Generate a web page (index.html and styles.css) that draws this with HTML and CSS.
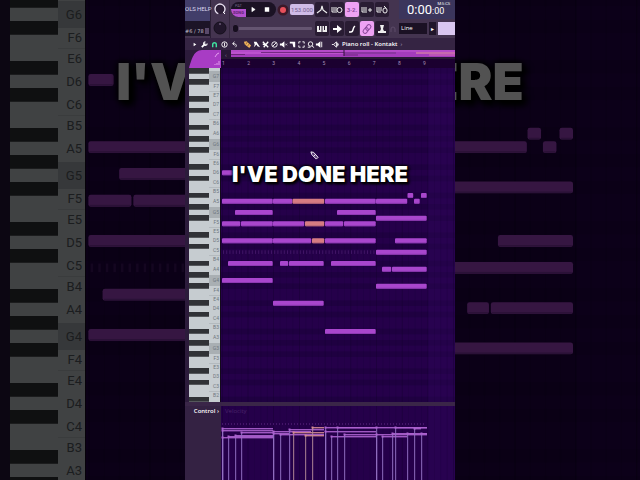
FILE: index.html
```
<!DOCTYPE html>
<html lang="en">
<head>
    <meta charset="UTF-8">
    <meta name="viewport" content="width=device-width, initial-scale=1.0">
    <title>Piano roll</title>
    <link rel="stylesheet" href="styles.css">
</head>
<body>
    <div class="stage">
        <!-- Enlarged, darkened roll behind the panel -->
        <div class="backdrop" aria-hidden="true">
            <div class="keyboard large" data-first="6" data-last="3"></div>
            <svg class="roll-canvas" viewBox="-1 71 234 203" preserveAspectRatio="xMinYMin slice"></svg>
            <p class="caption large">I'VE DONE HERE</p>
            <div class="shade"></div>
        </div>

        <main class="panel">
            <header class="toolbar">
                <div class="hints">
                    <div class="menu"><a href="#tools">OLS</a><a href="#help">HELP</a></div>
                    <div class="counter"><span>#6 / 78</span><i></i></div>
                </div>
                <div class="knobs">
                    <svg viewBox="0 0 16 19"><circle cx="8" cy="9" r="5" fill="#2b1d35" stroke="#e8e0f0" stroke-width="1.3" stroke-dasharray="25 7" transform="rotate(110 8 9)"/><path d="M11 12l2 2" stroke="#fff"/></svg>
                    <svg viewBox="0 0 16 19"><circle cx="8" cy="9" r="6" fill="#21162b" stroke="#15101c"/><path d="M8 4v2" stroke="#8d7a9c"/></svg>
                </div>
                <div class="transport">
                    <div class="line">
                        <div class="pill">
                            <button class="mode" aria-label="Pattern or song"><span>PAT</span><b>SONG</b></button>
                            <button aria-label="Play"><svg viewBox="0 0 10 10"><path d="M4 3l3 2-3 2z" fill="#fff" stroke="#fff" stroke-width=".5"/></svg></button>
                            <button aria-label="Stop"><svg viewBox="0 0 10 10"><path d="M3 3h4v4H3z" fill="#fff"/></svg></button>
                        </div>
                        <button class="record" aria-label="Record"><svg viewBox="0 0 12 12"><circle cx="6" cy="6" r="5.5" fill="#3c1828"/><circle cx="6" cy="6" r="3" fill="#e8505c"/></svg></button>
                        <input class="tempo" type="text" value="153.000" aria-label="Tempo">
                    </div>
                    <div class="line">
                        <input class="pitch" type="range" value="0" aria-label="Pitch">
                    </div>
                </div>
                <div class="switches">
                    <button aria-label="Metronome"><svg viewBox="0 0 14 14"><path d="M2 10l4-3 1-4 1 4 4 3" fill="none" stroke="#eee" stroke-width="1.2"/></svg></button>
                    <button aria-label="Wait for input"><svg viewBox="0 0 14 14"><path d="M2 4v5h5M4 4v4M6 4v4" fill="none" stroke="#eee"/><circle cx="9.500" cy="7" r="2.500" fill="none" stroke="#eee"/></svg></button>
                    <button class="on" aria-label="Countdown">3·2.</button>
                    <button aria-label="Overdub"><svg viewBox="0 0 14 14"><path d="M2 4v5h5M4 4v4M6 4v4M8 7h4M10 5v4" fill="none" stroke="#eee"/></svg></button>
                    <button aria-label="Loop record"><svg viewBox="0 0 14 14"><path d="M2 4v5h4M4 4v4M6 4v4" fill="none" stroke="#eee"/><rect x="8" y="5" width="4" height="5" rx="2" fill="none" stroke="#eee"/><path d="M9 3l2 2" stroke="#eee"/></svg></button>
                    <button aria-label="Typing keyboard"><svg viewBox="0 0 14 14"><path d="M2 4h10v6H2z" fill="#eee"/><path d="M4.500 4v4M7 4v6M9.500 4v4" stroke="#2a1c34"/></svg></button>
                    <button aria-label="Step edit"><svg viewBox="0 0 14 14"><path d="M3 6h4V3l5 4-5 4V8H3z" fill="#fff"/></svg></button>
                    <button aria-label="Glide"><svg viewBox="0 0 14 14"><path d="M4 10h2c3 0 1-4 4-6" fill="none" stroke="#fff" stroke-width="1.500"/></svg></button>
                    <button class="on" aria-label="Link"><svg viewBox="0 0 14 14"><g transform="rotate(-50 7 7)" fill="none" stroke="#8b4a9c"><rect x="2" y="5" width="6" height="4" rx="2"/><rect x="6" y="5" width="6" height="4" rx="2"/></g></svg></button>
                    <button aria-label="Metronome stamp"><svg viewBox="0 0 14 14"><path d="M3 11V9h2l1-2-1-4h4L8 7l1 2h2v2z" fill="#eee"/></svg></button>
                </div>
                <div class="status">
                    <div class="clock"><span>0:00<small>:00</small></span><sup>M:S:CS</sup></div>
                    <div class="snap">
                        <svg viewBox="0 0 8 10"><path d="M2 8V5a2 2 0 0 1 4 0v3" fill="none" stroke="#5c4b68"/></svg>
                        <select aria-label="Snap"><option>Line</option></select>
                        <button aria-label="Next">▸</button>
                        <span class="field"></span>
                    </div>
                </div>
            </header>

            <nav class="titlebar">
                <div class="tools main-tools">
                    <button aria-label="Menu"><svg viewBox="0 0 10 10"><path d="M4 3l3 2-3 2z" fill="#fff"/></svg></button>
                    <button aria-label="Options"><svg viewBox="0 0 10 10"><path d="M2 8l4-4" stroke="#fff" stroke-width="2"/><path d="M8 4a2 2 0 1 1-2-2" fill="none" stroke="#fff" stroke-width="1.300"/></svg></button>
                    <button aria-label="Magnet"><svg viewBox="0 0 10 10"><path d="M3 8V5a2 2 0 0 1 4 0v3" fill="none" stroke="#3fe0a0" stroke-width="1.600"/></svg></button>
                    <button aria-label="Stamp"><svg viewBox="0 0 10 10"><circle cx="5" cy="5" r="3" fill="none" stroke="#fff"/><path d="M5 3v4" stroke="#fff"/></svg></button>
                    <button aria-label="Undo"><svg viewBox="0 0 10 10"><path d="M6 8c2-2 1-4-3-4M5 2L3 4l2 2" fill="none" stroke="#fff"/></svg></button>
                </div>
                <div class="tools">
                    <button aria-label="Draw"><svg viewBox="0 0 10 10"><path d="M1 2l3-.5L9 6 7 9 2 5z" fill="#f0b45c"/><path d="M3 5l2-3M5 7l2-3" stroke="#5a3a20" stroke-width=".6"/></svg></button>
                    <button aria-label="Paint"><svg viewBox="0 0 10 10"><path d="M2 2h3l2 3 2 3-3-1-1-2-3 3 1-3z" fill="#fff"/></svg></button>
                    <button aria-label="Paint drums"><svg viewBox="0 0 10 10"><path d="M2 2l6 6M8 2L3 8M2 5l3-1" stroke="#fff" stroke-width="1.500"/></svg></button>
                    <button aria-label="Delete"><svg viewBox="0 0 10 10"><circle cx="5" cy="5" r="3" fill="none" stroke="#fff"/><path d="M3 7l4-4" stroke="#fff"/></svg></button>
                    <button aria-label="Mute"><svg viewBox="0 0 10 10"><path d="M1 4h2l3-2.500v7L3 6H1z" fill="#fff"/><path d="M7 4l2 2M9 4L7 6" stroke="#fff" stroke-width=".7"/></svg></button>
                    <button aria-label="Slice"><svg viewBox="0 0 10 10"><path d="M2 2h6v6H6L5 4H2z" fill="#fff"/></svg></button>
                    <button aria-label="Select"><svg viewBox="0 0 10 10"><path d="M2 4V2h2M6 2h2v2M8 6v2H6M4 8H2V6" fill="none" stroke="#fff"/></svg></button>
                    <button aria-label="Zoom"><svg viewBox="0 0 10 10"><circle cx="5" cy="4.500" r="2.500" fill="none" stroke="#fff"/><path d="M6.500 6.500L9 8.500M2 8h3" stroke="#fff"/></svg></button>
                    <button aria-label="Playback"><svg viewBox="0 0 10 10"><path d="M1 4h2l3-2.500v7L3 6H1zM7 2h1v6H7z" fill="#fff"/></svg></button>
                </div>
                <button class="target" aria-label="Target"><svg viewBox="0 0 10 10"><path d="M1 5h2l3-3v6L3 5M7 3v4M8 4v2" fill="none" stroke="#fff"/></svg></button>
                <h1>Piano roll - Kontakt</h1><span class="more">›</span>
            </nav>

            <section class="editor">
                <div class="corner"><svg viewBox="0 0 32 18"><path d="M0 18C2 12 4 0 13 0h19v18z" fill="#a83cc4"/><path d="M26 7l2-3 2-1" stroke="#e49cf0" fill="none"/><path d="M26 15v-1M28 15v-2M30 15v-4" stroke="#e49cf0"/></svg></div>
                <div class="timeline">
                    <div class="minimap">
                        <button aria-label="Scroll left">‹</button>
                        <svg viewBox="0 0 224 9" preserveAspectRatio="none">
                            <path d="M0 0h224v7H0z" fill="#a43cbc"/>
                            <path d="M0 1h224" stroke="#c458d4"/>
                            <path d="M0 3h113" stroke="#d468e0"/>
                            <path d="M113 3h52" stroke="#713085"/>
                            <path d="M0 4.500h14M30 2.500h83M113 5h14" stroke="#61206f" stroke-width=".8"/>
                            <path d="M185 3h39" stroke="#e698a0"/>
                            <path d="M198 5h26" stroke="#d46cb4"/>
                            <path d="M113 0v6" stroke="#30103c"/>
                        </svg>
                    </div>
                    <ol class="ruler"><li>1</li><li>2</li><li>3</li><li>4</li><li>5</li><li>6</li><li>7</li><li>8</li><li>9</li><li></li></ol>
                </div>
                <div class="keyboard" data-first="7" data-last="2"></div>
                <svg class="roll-canvas" viewBox="-1 0 234 334" preserveAspectRatio="xMinYMin slice"></svg>
            </section>

            <section class="control">
                <div class="control-name">Control <span>›</span></div>
                <div class="velocity">
                    <span class="velocity-name">Velocity</span>
                    <svg id="velocity" viewBox="-1 0 234 75" preserveAspectRatio="xMinYMin slice"></svg>
                </div>
            </section>

            <p class="caption">I'VE DONE HERE</p>
            <svg class="pencil" viewBox="0 0 10 10"><path d="M1 1l3 .5L9 7 7 9 2 4z" fill="#5c3c78" stroke="#fff"/><path d="M4 6l2-2" stroke="#fff"/></svg>
        </main>
    </div>
    <script src="script.js"></script>
</body>
</html>
```
FILE: styles.css
```
* {
    box-sizing: border-box;
    margin: 0;
    padding: 0;
}

body {
    background: #000;
    color: #fff;
    font-family: "Open Sans", "Noto Sans", sans-serif;
    overflow: hidden;
}

svg {
    display: block;
}

button {
    border: none;
    background: none;
    color: inherit;
    font: inherit;
    cursor: pointer;
}

.stage {
    position: relative;
    display: flex;
    justify-content: center;
    height: 100vh;
}

/* backdrop */
.backdrop {
    position: absolute;
    inset: 0;
    display: flex;
    padding-left: 10px;
    background: #26143a;
    overflow: hidden;
}

.shade {
    position: absolute;
    inset: 0;
    background: rgba(0, 0, 0, 0.68);
}

.caption {
    position: absolute;
    top: 161px;
    left: 0;
    right: 0;
    text-align: center;
    white-space: nowrap;
    font: 900 22px/26px Inter, sans-serif;
    text-shadow: 0 0 3px #000, 0 0 3px #000, 1px 1px 3px #000, 2px 2px 3px #000;
}

.caption.large {
    top: 52px;
    font-size: 51px;
    line-height: 60px;
    text-shadow: 0 0 7px #000, 0 0 7px #000, 3px 3px 7px #000, 5px 5px 7px #000;
}

/* panel */
.panel {
    position: relative;
    display: flex;
    flex-direction: column;
    height: 100%;
    aspect-ratio: 9 / 16;
    background: #2c1b3b;
    overflow: hidden;
}

.toolbar {
    display: flex;
    height: 38px;
    background: #443450;
}

.hints {
    width: 26px;
    border-right: 1px solid #2b1f36;
}

.menu {
    display: flex;
    gap: 1px;
    height: 21px;
    padding-top: 4px;
    background: #423e6a;
    font: 6px/10px Roboto, sans-serif;
}

.menu a {
    color: #d8d4ec;
    text-decoration: none;
}

.counter {
    display: flex;
    align-items: center;
    justify-content: space-between;
    height: 15px;
    padding: 5px 1px 0 0;
    background: #1c1427;
    color: #c8c0d0;
    font: 5px/8px "DejaVu Sans", sans-serif;
    white-space: nowrap;
}

.counter i {
    width: 4px;
    height: 6px;
    background: #59496a;
}

.knobs {
    width: 19px;
    padding-left: 1px;
    border-right: 1px solid #35273f;
}

.knobs svg {
    width: 16px;
    height: 19px;
}

.transport {
    width: 85px;
}

.line {
    display: flex;
    align-items: center;
    height: 19px;
    padding: 0 1px;
}

.pill {
    display: flex;
    align-items: center;
    width: 45px;
    height: 15px;
    border-radius: 8px;
    background: #1b1224;
    overflow: hidden;
}

.pill button {
    width: 14px;
}

.pill svg {
    width: 14px;
    height: 11px;
}

.pill .mode {
    display: flex;
    flex-direction: column;
    width: 15px;
    height: 15px;
    font: 4px/7px Roboto, sans-serif;
    color: #756482;
}

.mode b {
    background: #b552d0;
    color: #5d2272;
    line-height: 8px;
}

.record svg {
    width: 12px;
    height: 12px;
}

.record {
    margin: 0 1px;
}

.tempo {
    width: 24px;
    height: 11px;
    border: none;
    border-radius: 2px;
    background: #d0bce8;
    color: #766091;
    font: 6px/11px Roboto, sans-serif;
    text-align: center;
}

.pitch {
    appearance: none;
    width: 80px;
    height: 3px;
    margin-left: 1px;
    border-radius: 1px;
    background: #655571;
}

.pitch::-webkit-slider-thumb {
    appearance: none;
    width: 7px;
    height: 9px;
    border-radius: 3px;
    border: 1px solid #483755;
    background: #160e1e;
}

.switches {
    display: grid;
    grid-template-columns: repeat(5, 14px);
    grid-auto-rows: 15px;
    gap: 4px 1px;
    padding-top: 2px;
}

.switches button {
    border-radius: 2px;
    background: #291c33;
    font: bold 6px/15px Roboto, sans-serif;
}

.switches .on {
    background: #eea2f4;
    color: #8b4a9c;
}

.switches svg {
    width: 14px;
    height: 14px;
}

.status {
    flex: 1;
    min-width: 0;
}

.clock {
    display: flex;
    height: 19px;
    margin-left: 10px;
    padding-left: 8px;
    background: #3b355c;
    font: 13px/19px Roboto, sans-serif;
    overflow: hidden;
}

.clock small {
    font-size: 9px;
}

.clock sup {
    margin-left: -7px;
    font-size: 4px;
    line-height: 8px;
}

.snap {
    display: flex;
    align-items: center;
    gap: 2px;
    height: 19px;
}

.snap svg {
    width: 8px;
    height: 10px;
}

.snap select {
    appearance: none;
    width: 28px;
    height: 11px;
    padding-left: 2px;
    border: none;
    background: #1b1124;
    color: #fff;
    font: 6px/11px "Open Sans", sans-serif;
}

.snap button {
    width: 7px;
    height: 13px;
    background: #20152a;
    font-size: 6px;
}

.field {
    flex: 1;
    height: 13px;
    background: #d9c6f0;
}

.titlebar {
    display: flex;
    align-items: center;
    height: 12px;
    padding-left: 5px;
    background: #352443;
}

.tools {
    display: flex;
    margin-right: 7px;
}

.titlebar svg {
    width: 9px;
    height: 9px;
}

.tools button {
    width: 9px;
}

.main-tools {
    margin-right: 3px;
}

.main-tools button {
    width: 10px;
}

.titlebar h1 {
    margin-left: 2px;
    font: 600 6px/11px "Open Sans", sans-serif;
    white-space: nowrap;
}

.more {
    margin-left: 3px;
    font-size: 6px;
    color: #b4a4c0;
}

.editor {
    flex: 1;
    min-height: 0;
    display: grid;
    grid-template-columns: 32px 1fr;
    grid-template-rows: 18px 1fr;
    padding-left: 4px;
}

.corner svg {
    width: 100%;
    height: 18px;
}

.timeline {
    background: #1b0030;
    min-width: 0;
}

.minimap {
    display: flex;
    height: 9px;
    background: #281735;
}

.minimap button {
    width: 10px;
    font-size: 6px;
    line-height: 8px;
    color: #8a7698;
}

.minimap svg {
    flex: 1;
    min-width: 0;
    height: 9px;
}

.ruler {
    display: grid;
    grid-template-columns: repeat(9, 11fr) 3fr;
    list-style: none;
    height: 9px;
    padding-left: 1px;
    color: #a592b8;
    font: 5px/9px Roboto, sans-serif;
}

/* keyboard: an octave is 24 half steps high, key faces span 3 or 4 of them */
.keyboard {
    margin-top: -17px;
    overflow: hidden;
    clip-path: inset(17px 0 0 0);
    border-right: 1px solid #14091c;
    background: #c6ccd0;
}

.octave {
    display: grid;
    grid-template-columns: 20fr 11fr;
    grid-template-rows: repeat(24, minmax(0, 1fr));
    height: 68px;
}

.key {
    grid-column: 2;
    display: flex;
    align-items: center;
    justify-content: flex-end;
    padding-right: 1px;
    min-height: 0;
    color: #6f777f;
    font: 5px/5px Roboto, sans-serif;
}

.key.root {
    background: #a9afb3;
}

.key.edge {
    border-top: 1px solid #b4babe;
}

.black {
    grid-column: 1;
    background: #303236;
    border-bottom: 1px solid #55585c;
}

.keyboard.large {
    flex: none;
    width: 76px;
    margin-top: -46px;
    clip-path: none;
}

.large .octave {
    height: 161px;
}

.large .key {
    padding-right: 3px;
    color: #555a60;
    font-size: 13px;
    line-height: 13px;
}

.roll-canvas {
    width: 100%;
    height: 100%;
    min-width: 0;
    min-height: 0;
    background: #25004a;
}

.control {
    display: flex;
    height: 78px;
    border-top: 4px solid #3a2648;
}

.control-name {
    width: 36px;
    padding: 1px 2px 0 0;
    background: #342243;
    font-size: 6px;
    font-weight: 600;
    line-height: 8px;
    text-align: right;
    white-space: nowrap;
}

.velocity {
    position: relative;
    flex: 1;
    min-width: 0;
    background: #25004a;
}

.velocity-name {
    position: absolute;
    top: 1px;
    left: 4px;
    color: #4b246a;
    font-size: 6px;
    line-height: 8px;
}

.velocity svg {
    width: 100%;
    height: 100%;
}

.pencil {
    position: absolute;
    top: 151px;
    left: 125px;
    width: 9px;
    height: 9px;
}
```
FILE: script.js
```
var STEP = 68 / 12;   // height of one semitone
var BAR = 25.7;       // width of one bar

// white keys from the top of an octave: name, rows spanned
var whites = [["B", 3], ["A", 4], ["G", 4], ["F", 3], ["E", 3], ["D", 4], ["C", 3]];
var blacks = [3, 7, 11, 17, 21];

// [row below B7, start, end, selected]
var notes = [
    [21, 0, 11],
    [25, 185.5, 191.5], [25, 199, 205],
    [26, 0, 51], [26, 51, 70.5], [26, 70.5, 102.5, 1], [26, 103, 154], [26, 154, 185.5], [26, 192, 198],
    [28, 13, 51], [28, 115, 154],
    [29, 154, 205],
    [30, 0, 18.5], [30, 19, 51], [30, 51, 82.5], [30, 83, 102.5, 1], [30, 103, 121.5], [30, 122, 154],
    [33, 0, 51], [33, 51, 89.5], [33, 90, 102.5, 1], [33, 103, 154], [33, 173, 205],
    [35, 154, 205],
    [37, 6, 51], [37, 58, 66.5], [37, 67, 102], [37, 109, 154],
    [38, 160, 169.5], [38, 170, 205],
    [40, 0, 51],
    [41, 154, 205],
    [44, 51, 102],
    [49, 103, 154]
];

// velocity handles: [start, end, y, selected]
var levels = [
    [0, 51, 22], [0, 51, 24], [6, 51, 30], [13, 51, 29], [19, 51, 26], [0, 51, 31],
    [51, 89, 25], [51, 67, 27], [58, 102, 28], [67, 102, 23], [71, 102, 26, 1],
    [83, 102, 29, 1], [90, 102, 21, 1],
    [103, 154, 21], [103, 154, 25], [109, 154, 30], [115, 154, 21], [122, 154, 28],
    [154, 205, 21], [154, 205, 28], [160, 185, 30], [170, 205, 27], [173, 205, 21],
    [185, 192, 27], [192, 199, 22], [199, 205, 27]
];

function shape(parent, name, attrs) {
    var el = document.createElementNS("http://www.w3.org/2000/svg", name);
    for (var key in attrs) el.setAttribute(key, attrs[key]);
    parent.appendChild(el);
}

function drawKeyboard(board) {
    for (var n = +board.dataset.first; n >= +board.dataset.last; n--) {
        var octave = document.createElement("div");
        octave.className = "octave";
        var row = 1;
        whites.forEach(function (white) {
            var key = document.createElement("span");
            key.className = "key" + (white[0] === "G" ? " root" : "") + (white[0] === "B" || white[0] === "E" ? " edge" : "");
            key.style.gridRow = row + " / span " + white[1];
            key.textContent = white[0] + n;
            octave.appendChild(key);
            row += white[1];
        });
        blacks.forEach(function (start) {
            var key = document.createElement("span");
            key.className = "black";
            key.style.gridRow = start + " / span 2";
            octave.appendChild(key);
        });
        board.appendChild(octave);
    }
}

function drawBars(svg, height) {
    shape(svg, "rect", { x: 206, y: 0, width: 60, height: height, fill: "#330860", opacity: 0.3 });
    for (var i = 0; i <= 40; i++) {
        shape(svg, "rect", { x: i * BAR / 4, y: 0, width: 0.6, height: height, fill: "#14002e", opacity: i % 4 ? 0.25 : 0.6 });
    }
}

function drawRoll(svg) {
    for (var row = 0; row < 64; row++) {
        if ([1, 3, 5, 8, 10].includes(row % 12)) {
            shape(svg, "rect", { x: -1, y: -17 + row * STEP, width: 260, height: STEP, fill: "#1c003c", opacity: 0.6 });
        }
    }
    drawBars(svg, 340);
    // ghost notes on C5
    for (var x = 1; x < 154; x += 3.2) {
        shape(svg, "rect", { x: x, y: -16 + 35 * STEP, width: 1, height: 3.6, fill: "#4c1c70", opacity: 0.7 });
    }
    notes.forEach(function (note) {
        var top = -17 + note[0] * STEP + 0.3;
        var width = note[2] - note[1] - 0.3;
        shape(svg, "rect", { x: note[1], y: top, width: width, height: 5, rx: 1, fill: note[3] ? "#d67c82" : "#a946cd" });
        shape(svg, "rect", { x: note[1] + 0.5, y: top + 4.2, width: width - 1, height: 0.7, fill: note[3] ? "#a85c72" : "#8436aa" });
    });
}

function drawVelocity(svg) {
    drawBars(svg, 75);
    for (var x = 0; x < 204; x += 3) {
        shape(svg, "rect", { x: x, y: 17, width: 1, height: 2, fill: "#431468" });
    }
    levels.forEach(function (level) {
        var color = level[3] ? "#d48a92" : "#ad62cf";
        shape(svg, "rect", { x: level[0], y: level[2], width: level[1] - level[0], height: 1.4, fill: color, opacity: 0.9 });
        shape(svg, "rect", { x: level[0], y: level[2], width: 1.2, height: 75, fill: level[3] ? "#b58a98" : "#9370c4", opacity: 0.8 });
        shape(svg, "rect", { x: level[0] - 0.5, y: level[2] - 0.5, width: 2, height: 2, fill: color });
    });
}

document.querySelectorAll(".keyboard").forEach(drawKeyboard);
document.querySelectorAll(".roll-canvas").forEach(drawRoll);
drawVelocity(document.getElementById("velocity"));
```
